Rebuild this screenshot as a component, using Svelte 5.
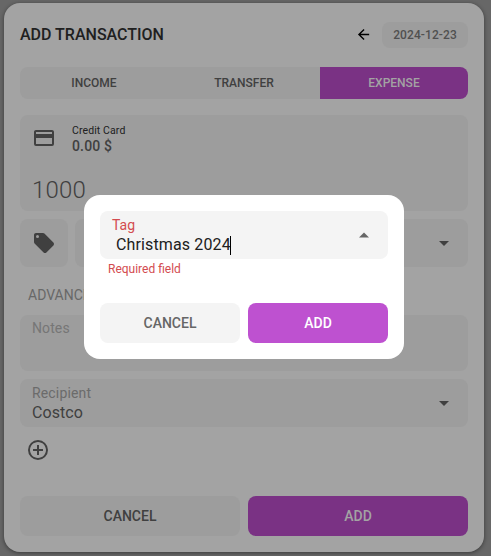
<script>
  const tabs = ['INCOME', 'TRANSFER', 'EXPENSE'];
  let active = $state('EXPENSE');
  let tag = $state('Christmas 2024');
</script>

<main class="page">
  <section class="card">
    <header>
      <h1>ADD TRANSACTION</h1>
      <svg class="back" viewBox="0 0 24 24"><path d="M20 11v2H8l5.500 5.500-1.420 1.420L4.160 12l7.920-7.920L13.500 5.500 8 11h12z" /></svg>
      <button class="date">2024-12-23</button>
    </header>

    <nav class="tabs">
      {#each tabs as tab}
        <button class:active={tab === active} onclick={() => (active = tab)}>{tab}</button>
      {/each}
    </nav>

    <div class="account">
      <div class="account-top">
        <svg viewBox="0 0 24 24"><path d="M20 8H4V6h16m0 12H4v-6h16m0-8H4c-1.110 0-2 .89-2 2v12a2 2 0 0 0 2 2h16a2 2 0 0 0 2-2V6c0-1.110-.9-2-2-2z" /></svg>
        <div>
          <div class="name">Credit Card</div>
          <div class="balance">0.00 $</div>
        </div>
      </div>
      <div class="amount">1000</div>
    </div>

    <div class="tag-row">
      <button class="tag-btn" aria-label="Tags">
        <svg viewBox="0 0 24 24"><path d="M5.500 7A1.500 1.500 0 0 1 4 5.500 1.500 1.500 0 0 1 5.500 4 1.500 1.500 0 0 1 7 5.500 1.500 1.500 0 0 1 5.500 7m15.910 4.580-9-9C12.050 2.220 11.550 2 11 2H4c-1.110 0-2 .89-2 2v7c0 .55.220 1.050.590 1.410l8.990 9c.370.360.870.590 1.420.590s1.050-.23 1.410-.59l7-7c.370-.36.590-.86.590-1.410 0-.56-.23-1.060-.59-1.420z" /></svg>
      </button>
      <div class="category"><svg viewBox="0 0 24 24"><path d="M7 10l5 5 5-5z" /></svg></div>
    </div>

    <div class="advanced">ADVANCED</div>
    <div class="notes">Notes</div>

    <div class="recipient">
      <div>
        <div class="label">Recipient</div>
        <div class="value">Costco</div>
      </div>
      <svg viewBox="0 0 24 24"><path d="M7 10l5 5 5-5z" /></svg>
    </div>

    <svg class="plus" viewBox="0 0 24 24"><path d="M12 20c-4.410 0-8-3.590-8-8s3.590-8 8-8 8 3.590 8 8-3.590 8-8 8m0-18A10 10 0 0 0 2 12a10 10 0 0 0 10 10 10 10 0 0 0 10-10A10 10 0 0 0 12 2m1 5h-2v4H7v2h4v4h2v-4h4v-2h-4V7z" /></svg>

    <footer class="actions">
      <button class="cancel">CANCEL</button>
      <button class="add">ADD</button>
    </footer>
  </section>

  <div class="modal">
    <div class="field">
      <div>
        <div class="field-label">Tag</div>
        <div class="field-value">{tag}<i class="caret"></i></div>
      </div>
      <svg viewBox="0 0 24 24"><path d="M7 14.500l5-5 5 5z" /></svg>
    </div>
    <div class="error">Required field</div>
    <div class="actions">
      <button class="cancel">CANCEL</button>
      <button class="add">ADD</button>
    </div>
  </div>
</main>

<style>
  :global(body) { margin: 0; }
  .page {
    box-sizing: border-box;
    width: 491px;
    height: 556px;
    padding: 3px 7px 4px 4px;
    background: #676767;
    font-family: Roboto, "Liberation Sans", sans-serif;
    position: relative;
    overflow: hidden;
  }
  .page :global(*) { box-sizing: border-box; }
  button {
    border: 0;
    margin: 0;
    padding: 0;
    font-family: inherit;
    font-weight: 500;
    color: #404040;
    background: #9d9d9d;
  }
  svg { display: block; width: 24px; height: 24px; fill: #404040; flex: none; }
  .card {
    width: 480px;
    height: 549px;
    padding: 16px;
    border-radius: 16px;
    background: #a3a3a3;
    box-shadow: 0 1px 4px rgba(0, 0, 0, 0.45);
    display: flex;
    flex-direction: column;
  }
  header { display: flex; align-items: center; height: 32px; }
  h1 {
    margin: 0;
    flex: 1;
    font-size: 16px;
    line-height: 24px;
    font-weight: 500;
    color: #202020;
  }
  .back { width: 17px; height: 17px; fill: #000; margin: 0 10px 1px 0; }
  .date { width: 86px; height: 26px; border-radius: 8px; font-size: 12px; letter-spacing: 0.1px; color: #505050; }
  .tabs {
    display: flex;
    height: 32px;
    margin-top: 16px;
    border-radius: 8px;
    overflow: hidden;
    flex: none;
  }
  .tabs button { flex: 1 1 150px; font-size: 12px; padding-right: 2px; }
  .tabs button.active { flex-basis: 148px; flex-grow: 0; padding: 0; background: #7a3284; color: #a3a3a3; }
  .account {
    height: 96px;
    flex: none;
    margin-top: 16px;
    padding: 8px 12px;
    border-radius: 8px;
    background: #9d9d9d;
  }
  .account-top { display: flex; gap: 16px; height: 32px; align-items: center; }
  .account-top svg { margin-bottom: 2px; }
  .name { font-size: 10.5px; line-height: 14px; letter-spacing: 0.1px; color: #202020; padding-top: 1px; }
  .balance { font-size: 14px; line-height: 17px; font-weight: 500; letter-spacing: 0.15px; color: #404040; }
  .amount { font-size: 24px; line-height: 28px; font-weight: 300; letter-spacing: 0.15px; margin-top: 21px; color: #404040; }
  .tag-row { display: flex; gap: 7px; height: 48px; margin-top: 8px; flex: none; }
  .tag-btn { width: 48px; border-radius: 8px; display: grid; place-items: center; }
  .category, .recipient {
    display: flex;
    align-items: center;
    justify-content: flex-end;
    border-radius: 8px;
    padding: 0 12px;
    background: #9d9d9d;
  }
  .category { flex: 1; }
  .advanced { height: 40px; margin: 8px 0 0 8px; font-size: 14px; line-height: 40px; color: #686868; flex: none; }
  .notes { height: 56px; flex: none; border-radius: 8px; background: #9d9d9d; padding: 4px 12px; font-size: 14px; line-height: 18px; letter-spacing: 0.1px; color: #767676; }
  .recipient { height: 48px; flex: none; margin-top: 8px; justify-content: space-between; }
  .label { font-size: 14px; line-height: 18px; letter-spacing: 0.15px; color: #6b6b6b; }
  .value { font-size: 16px; line-height: 18px; padding-top: 2px; letter-spacing: 0.05px; color: #404040; }
  .plus { margin: 11px 0 0 6px; }
  .actions { display: flex; gap: 8px; }
  footer.actions { margin-top: auto; }
  .actions button { flex: 1; height: 40px; border-radius: 8px; font-size: 14px; }
  .actions .add { background: #7a3284; color: #a3a3a3; }
  .modal {
    position: absolute;
    left: 84px;
    top: 195px;
    width: 320px;
    height: 164px;
    padding: 16px;
    border-radius: 16px;
    background: #fff;
  }
  .field {
    display: flex;
    justify-content: space-between;
    align-items: center;
    height: 48px;
    padding: 0 12px;
    border-radius: 8px;
    background: #f4f4f4;
  }
  .field svg { fill: #666; }
  .field-label { font-size: 14px; line-height: 18px; color: #d34b4f; }
  .field-value { display: flex; align-items: center; height: 20px; margin-left: 4px; padding-top: 2px; font-size: 16px; line-height: 18px; letter-spacing: 0.13px; color: #202020; }
  .caret { width: 1px; height: 19px; margin-left: -1px; background: #000; }
  .error { height: 20px; padding-left: 8px; font-size: 12px; line-height: 20px; color: #d34b4f; }
  .modal .actions { margin-top: 24px; }
  .modal .cancel { background: #f4f4f4; color: #666; }
  .modal .add { background: #be51d0; color: #fff; }
</style>
